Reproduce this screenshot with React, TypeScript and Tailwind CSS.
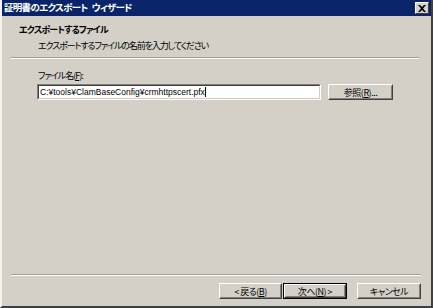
import React from "react";

const jp = { fontFamily: '"Noto Sans CJK JP", "Noto Sans", sans-serif', fontFeatureSettings: '"palt"' } as React.CSSProperties;

function Btn({ children, def, className }: { children: React.ReactNode; def?: boolean; className?: string }) {
  return (
    <div className={`${def ? "border border-black" : ""} ${className ?? ""}`}>
      <div className="h-full border border-t-white border-l-white border-r-[#404040] border-b-[#404040]">
        <div className="h-full flex items-center justify-center border border-t-[#d4d0c8] border-l-[#d4d0c8] border-r-[#808080] border-b-[#808080] text-[9px] tracking-[-0.5px] leading-none text-black" style={jp}>
          {children}
        </div>
      </div>
    </div>
  );
}

export default function App() {
  return (
    <div className="w-[433px] h-[308px] bg-[#d4d0c8] flex flex-col border-l-2 border-l-[#f4f3f0] border-r-2 border-r-[#404040] border-b-2 border-b-[#404040] overflow-hidden">
      <div className="h-[16px] bg-[#0a246a] flex items-center justify-between pl-[2px] pr-[2px]">
        <span className="text-white text-[9.5px] tracking-[-0.7px] font-bold leading-none whitespace-nowrap" style={jp}>
          証明書のエクスポート<span className="inline-block w-[4px]" />ウィザード
        </span>
        <div className="w-[14px] h-[12px] bg-[#d4d0c8] border border-t-white border-l-white border-r-[#404040] border-b-[#404040] flex items-center justify-center">
          <svg width="8" height="7" viewBox="0 0 8 7"><path d="M0 0h2l2 2 2-2h2L5 3.5 8 7H6L4 5 2 7H0l3-3.5z" fill="#000" /></svg>
        </div>
      </div>
      <div className="flex-1 flex flex-col">
        <div className="pl-[17px] pt-[7px] text-[9px] tracking-[-0.8px] font-bold leading-[14px] text-black" style={jp}>エクスポートするファイル</div>
        <div className="pl-[36px] pt-[2px] text-[9px] tracking-[-1.1px] leading-[14px] text-black" style={jp}>エクスポートするファイルの名前を入力してください</div>
        <div className="ml-[9px] mr-[12px] mt-[4px] h-[2px] border-t border-t-[#a09e98] border-b border-b-white" />
        <div className="pl-[36px] pt-[11px] text-[9px] tracking-[-1px] leading-[12px] text-black" style={jp}>ファイル名(<span className="underline">F</span>):</div>
        <div className="flex items-start mt-[2px]">
          <div className="ml-[35px] w-[284px] h-[16px] bg-white border border-t-[#808080] border-l-[#808080] border-r-white border-b-white">
            <div className="h-full border border-t-[#404040] border-l-[#404040] border-r-[#d4d0c8] border-b-[#d4d0c8] flex items-center pl-[1px]">
              <span className="text-[8.5px] leading-none text-black" style={{ fontFamily: '"Liberation Sans", Arial, sans-serif' }}>C:¥tools¥ClamBaseConfig¥crmhttpscert.pfx</span>
              <span className="w-[1px] h-[10px] bg-black" />
            </div>
          </div>
          <Btn className="ml-[7px] w-[65px] h-[16px]">参照(<span className="underline">R</span>)...</Btn>
        </div>
        <div className="flex-1" />
        <div className="ml-[9px] mr-[10px] h-[2px] border-t border-t-[#a09e98] border-b border-b-white" />
        <div className="flex justify-end pr-[10px] pt-[7px] pb-[7px]">
          <Btn className="w-[63px] h-[16px]">&lt; 戻る(<span className="underline">B</span>)</Btn>
          <Btn def className="ml-[1px] w-[64px] h-[16px]">次へ(<span className="underline">N</span>) &gt;</Btn>
          <Btn className="ml-[10px] w-[64px] h-[16px]">キャンセル</Btn>
        </div>
      </div>
    </div>
  );
}
